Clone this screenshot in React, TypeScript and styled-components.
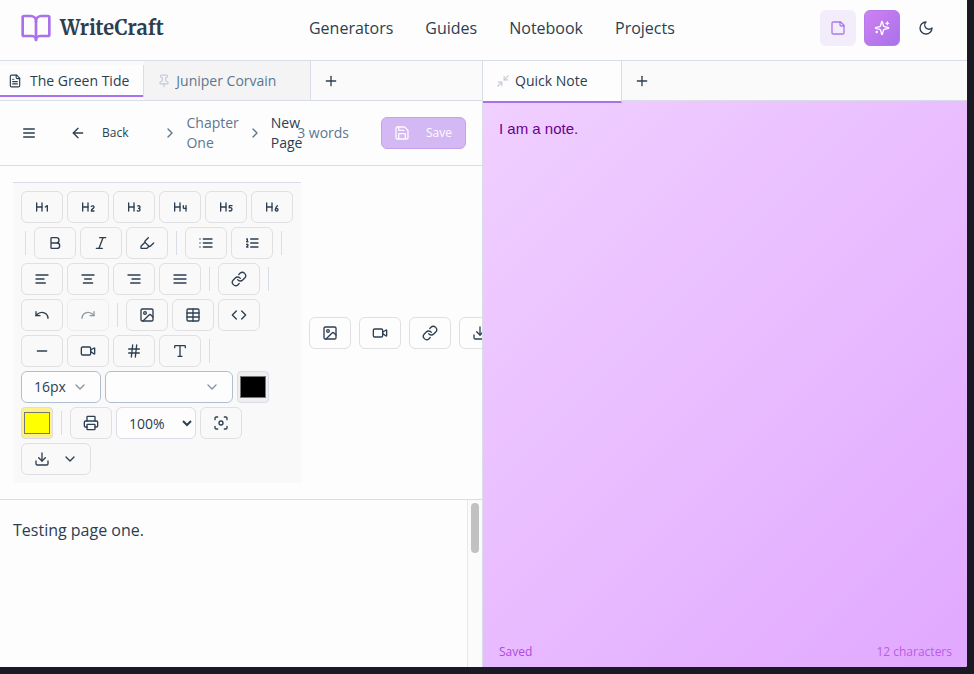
import React from 'react';
import styled, { createGlobalStyle, css } from 'styled-components';
import {
  ArrowLeft,
  Bold,
  BookOpen,
  ChevronDown,
  ChevronRight,
  Code,
  Download,
  Focus,
  Hash,
  Heading1,
  Heading2,
  Heading3,
  Heading4,
  Heading5,
  Heading6,
  Highlighter,
  Image as ImageIcon,
  Italic,
  Link as LinkIcon,
  Minimize2,
  Minus,
  Pin,
  Plus,
  Printer,
  Redo,
  Save,
  Table,
  Type,
  Undo,
  Video,
} from 'lucide-react';

const ink = '#2c3e50';
const muted = '#5d7790';
const line = '#d9dde8';
const accent = '#a971ec';

type Icon = React.ComponentType<{ size?: number }>;

const drawn = (...paths: string[]): Icon => ({ size = 16 }) => (
  <svg
    width={size}
    height={size}
    viewBox="0 0 24 24"
    fill="none"
    stroke="currentColor"
    strokeWidth="2"
    strokeLinecap="round"
    strokeLinejoin="round"
    aria-hidden="true"
  >
    {paths.map((d) => <path key={d} d={d} />)}
  </svg>
);

const Menu = drawn('M4 6h16', 'M4 12h16', 'M4 18h16');
const AlignLeft = drawn('M3 6h18', 'M3 12h12', 'M3 18h14');
const AlignCenter = drawn('M3 6h18', 'M7 12h10', 'M5 18h14');
const AlignRight = drawn('M3 6h18', 'M9 12h12', 'M7 18h14');
const AlignJustify = drawn('M3 6h18', 'M3 12h18', 'M3 18h18');
const List = drawn('M8 6h13', 'M8 12h13', 'M8 18h13', 'M3 6h.01', 'M3 12h.01', 'M3 18h.01');
const ListOrdered = drawn('M10 6h11', 'M10 12h11', 'M10 18h11', 'M4 6h1v4', 'M4 10h2', 'M6 18H4c0-1 2-2 2-3s-1-1.5-2-1');
const Moon = drawn('M12 3a6 6 0 0 0 9 9 9 9 0 1 1-9-9Z');
const StickyNote = drawn('M16 3H5a2 2 0 0 0-2 2v14a2 2 0 0 0 2 2h14a2 2 0 0 0 2-2V8Z', 'M15 3v4a2 2 0 0 0 2 2h4');
const FileText = drawn(
  'M15 2H6a2 2 0 0 0-2 2v16a2 2 0 0 0 2 2h12a2 2 0 0 0 2-2V7Z',
  'M14 2v4a2 2 0 0 0 2 2h4',
  'M10 9H8',
  'M16 13H8',
  'M16 17H8',
);
const Sparkles = drawn(
  'M9.937 15.5A2 2 0 0 0 8.5 14.063l-6.135-1.582a.5.5 0 0 1 0-.962L8.5 9.936A2 2 0 0 0 9.937 8.5l1.582-6.135a.5.5 0 0 1 .963 0L14.063 8.5A2 2 0 0 0 15.5 9.937l6.135 1.581a.5.5 0 0 1 0 .964L15.5 14.063a2 2 0 0 0-1.437 1.437l-1.582 6.135a.5.5 0 0 1-.963 0z',
  'M20 3v4',
  'M22 5h-4',
  'M4 17v2',
  'M5 18H3',
);

const GlobalStyle = createGlobalStyle`
  *, *::before, *::after { box-sizing: border-box; }
  body {
    margin: 0;
    background: #1a1a24;
    color: ${ink};
    font-family: "Open Sans", "Noto Sans", sans-serif;
    font-size: 14px;
    line-height: 20px;
  }
  button, select, input, textarea { font: inherit; color: inherit; }
  button { cursor: pointer; }
`;

const Backdrop = styled.div`
  height: 100vh;
  padding: 0 7px 7px 0;
`;

const Shell = styled.div`
  height: 100%;
  display: flex;
  flex-direction: column;
  background: #fdfdfd;
  border-radius: 0 0 2px 0;
  overflow: hidden;
`;

const Header = styled.header`
  display: flex;
  align-items: center;
  justify-content: space-between;
  flex: none;
  height: 61px;
  padding: 0 23px 4px 20px;
  border-bottom: 1px solid ${line};
`;

const Brand = styled.a`
  display: flex;
  align-items: center;
  gap: 8px;
  color: ${ink};
  font: bold 20px/32px Merriweather, "Liberation Serif", serif;
  text-decoration: none;
  svg { color: ${accent}; }
`;

const MainNav = styled.nav`
  display: flex;
  gap: 32px;
`;

const NavLink = styled.a`
  color: ${ink};
  font-size: 16px;
  line-height: 24px;
  text-decoration: none;
`;

const Actions = styled.div`
  display: flex;
  gap: 8px;
`;

const ActionButton = styled.button<{ $tone?: 'soft' | 'solid' }>`
  display: grid;
  place-items: center;
  width: 36px;
  height: 36px;
  padding: 0;
  border: 0;
  border-radius: 6px;
  background: transparent;
  ${(p) => p.$tone === 'soft' && css`
    background: #f3edfb;
    color: #ab79ea;
  `}
  ${(p) => p.$tone === 'solid' && css`
    border: 1px solid #b57aec;
    background: linear-gradient(135deg, #cf80f0, #a872ea);
    color: #fff;
  `}
`;

const Panes = styled.main`
  flex: 1;
  min-height: 0;
  display: grid;
  grid-template-columns: minmax(0, 483fr) minmax(0, 484fr);
`;

const Pane = styled.section<{ $divided?: boolean }>`
  display: flex;
  flex-direction: column;
  min-width: 0;
  min-height: 0;
  overflow: hidden;
  border-right: ${(p) => (p.$divided ? `1px solid ${line}` : '0')};
`;

const TabStrip = styled.div`
  display: flex;
  flex: none;
  height: 40px;
  background: #fafafa;
  border-bottom: 1px solid ${line};
`;

const Tab = styled.button<{ $look: 'raised' | 'idle' | 'full' }>`
  display: flex;
  align-items: center;
  gap: 5px;
  padding: 0 34px 0 13px;
  border: 0;
  border-right: 1px solid ${line};
  background: #f4f4f4;
  color: ${muted};
  font-weight: 500;
  white-space: nowrap;
  svg { color: #c3cbd8; }
  ${(p) => p.$look === 'raised' && css`
    gap: 8px;
    margin: 4px 0 3px;
    padding: 0 14px 0 8px;
    background: #fdfdfd;
    color: ${ink};
    box-shadow: inset 0 -2px ${accent};
    svg { color: ${ink}; }
  `}
  ${(p) => p.$look === 'full' && css`
    position: relative;
    z-index: 1;
    height: 42px;
    padding: 0 33px 0 13px;
    background: #fdfdfd;
    color: ${ink};
    border-bottom: 2px solid ${accent};
  `}
`;

const AddTab = styled.button`
  display: grid;
  place-items: center;
  width: 40px;
  padding: 0;
  border: 0;
  background: transparent;
`;

const PageBar = styled.div`
  display: flex;
  align-items: center;
  flex: none;
  height: 65px;
  padding: 0 16px 0 13px;
  border-bottom: 1px solid ${line};
`;

const GhostButton = styled.button`
  display: flex;
  align-items: center;
  flex: none;
  gap: 16px;
  height: 32px;
  padding: 0 8px;
  border: 0;
  background: transparent;
  font-size: 12px;
  font-weight: 500;
`;

const BackButton = styled(GhostButton)`
  margin-left: 17px;
  padding-right: 34px;
`;

const Crumbs = styled.nav`
  flex: 1;
  min-width: 0;
  display: flex;
  align-items: center;
  gap: 8px;
  svg { flex: none; color: ${muted}; }
`;

const Crumb = styled.a`
  flex: none;
  width: min-content;
  color: ${muted};
  text-decoration: none;
`;

const CurrentCrumb = styled.span`
  width: 24px;
  flex: none;
  color: ${ink};
  font-weight: 500;
`;

const WordCount = styled.span`
  flex: none;
  margin-right: 32px;
  color: ${muted};
`;

const SaveButton = styled.button`
  display: flex;
  align-items: center;
  flex: none;
  gap: 16px;
  height: 32px;
  padding: 0 13px 0 12px;
  border: 1px solid #c6a0ef;
  border-radius: 6px;
  background: #d4b8f4;
  color: #fdfaff;
  font-size: 12px;
  font-weight: 500;
`;

const ToolArea = styled.div`
  display: flex;
  align-items: center;
  gap: 8px;
  flex: none;
  padding: 16px 13px;
  border-bottom: 1px solid ${line};
  overflow: hidden;
`;

const FormatBar = styled.div`
  display: flex;
  flex-wrap: wrap;
  align-items: center;
  flex: none;
  gap: 4px;
  width: 288px;
  padding: 8px;
  border-top: 1px solid ${line};
  background: #f9f9f9;
`;

const InsertBar = styled.div`
  display: flex;
  flex: none;
  gap: 8px;
`;

const ToolButton = styled.button<{ $wide?: boolean }>`
  display: flex;
  align-items: center;
  justify-content: center;
  gap: 12px;
  width: ${(p) => (p.$wide ? 70 : 42)}px;
  height: 32px;
  padding: 0;
  border: 1px solid #e0e0e3;
  border-radius: 6px;
  background: transparent;
  &:disabled { color: ${ink}; opacity: 0.5; }
`;

const Divider = styled.span`
  width: 1px;
  height: 24px;
  margin: 0 4px;
  background: ${line};
`;

const SelectBox = styled.span<{ $width: number }>`
  display: grid;
  align-items: center;
  width: ${(p) => p.$width}px;
  height: 32px;
  > * { grid-area: 1 / 1; }
  svg {
    justify-self: end;
    margin-right: 13px;
    color: #8795a3;
    pointer-events: none;
  }
`;

const PlainSelect = styled.select`
  appearance: none;
  width: 100%;
  height: 32px;
  padding: 0 12px;
  border: 1px solid #b0bfd0;
  border-radius: 6px;
  background: #fdfdfd;
`;

const ZoomSelect = styled.select`
  width: 80px;
  height: 32px;
  padding: 0 0 0 8px;
  border: 1px solid ${line};
  border-radius: 6px;
  background: #fdfdfd;
`;

const Swatch = styled.input<{ $back: string }>`
  width: 32px;
  height: 32px;
  padding: 4px 2px;
  border: 1px solid ${line};
  border-radius: 4px;
  background: ${(p) => p.$back};
  &::-webkit-color-swatch-wrapper { padding: 0; }
  &::-webkit-color-swatch { border: 1px solid #767676; border-radius: 0; }
`;

const Document = styled.div`
  flex: 1;
  min-height: 0;
  display: flex;
`;

const Page = styled.textarea`
  flex: 1;
  min-width: 0;
  padding: 16px 13px;
  border: 0;
  outline: 0;
  resize: none;
  overflow: hidden;
  background: transparent;
  font-size: 16px;
  line-height: 28px;
`;

const ScrollTrack = styled.div`
  width: 15px;
  padding: 3px;
  border-left: 1px solid #e8e8e8;
  background: #fbfbfb;
`;

const ScrollThumb = styled.div`
  height: 50px;
  border-radius: 4px;
  background: #c1c1c1;
`;

const Note = styled.div`
  flex: 1;
  min-height: 0;
  display: flex;
  flex-direction: column;
  background: linear-gradient(135deg, #f0d0ff, #e1a8ff);
`;

const NoteText = styled.textarea`
  flex: 1;
  padding: 16px;
  border: 0;
  outline: 0;
  resize: none;
  overflow: hidden;
  background: transparent;
  color: #6a0090;
  font: 15px/24px "Liberation Sans", Arial, sans-serif;
`;

const NoteStatus = styled.footer`
  display: flex;
  justify-content: space-between;
  padding: 0 15px 5px 16px;
  color: #b04ae0;
  font-size: 12px;
`;

const Count = styled.span`
  opacity: 0.8;
`;

const headings = [Heading1, Heading2, Heading3, Heading4, Heading5, Heading6];

const Tool = ({ icon: Glyph, label, disabled }: { icon: Icon; label: string; disabled?: boolean }) => (
  <ToolButton type="button" aria-label={label} disabled={disabled}>
    <Glyph size={16} />
  </ToolButton>
);

export default function App() {
  return (
    <>
      <GlobalStyle />
      <Backdrop>
        <Shell>
          <Header>
            <Brand href="#home">
              <BookOpen size={32} />
              WriteCraft
            </Brand>
            <MainNav aria-label="Main">
              <NavLink href="#generators">Generators</NavLink>
              <NavLink href="#guides">Guides</NavLink>
              <NavLink href="#notebook">Notebook</NavLink>
              <NavLink href="#projects">Projects</NavLink>
            </MainNav>
            <Actions>
              <ActionButton type="button" $tone="soft" aria-label="Quick note"><StickyNote size={16} /></ActionButton>
              <ActionButton type="button" $tone="solid" aria-label="Assistant"><Sparkles size={16} /></ActionButton>
              <ActionButton type="button" aria-label="Dark mode"><Moon size={16} /></ActionButton>
            </Actions>
          </Header>
          <Panes>
            <Pane $divided>
              <TabStrip role="tablist">
                <Tab type="button" role="tab" aria-selected $look="raised"><FileText size={14} />The Green Tide</Tab>
                <Tab type="button" role="tab" aria-selected={false} $look="idle"><Pin size={14} />Juniper Corvain</Tab>
                <AddTab type="button" aria-label="New tab"><Plus size={16} /></AddTab>
              </TabStrip>
              <PageBar>
                <GhostButton type="button" aria-label="Menu"><Menu size={16} /></GhostButton>
                <BackButton type="button"><ArrowLeft size={16} />Back</BackButton>
                <Crumbs aria-label="Breadcrumb">
                  <ChevronRight size={16} />
                  <Crumb href="#chapter">Chapter One</Crumb>
                  <ChevronRight size={16} />
                  <CurrentCrumb>New Page</CurrentCrumb>
                </Crumbs>
                <WordCount>3 words</WordCount>
                <SaveButton type="button"><Save size={16} />Save</SaveButton>
              </PageBar>
              <ToolArea>
                <FormatBar role="toolbar" aria-label="Formatting">
                  {headings.map((icon, i) => <Tool key={i} icon={icon} label={`Heading ${i + 1}`} />)}
                  <Divider />
                  <Tool icon={Bold} label="Bold" />
                  <Tool icon={Italic} label="Italic" />
                  <Tool icon={Highlighter} label="Highlight" />
                  <Divider />
                  <Tool icon={List} label="Bulleted list" />
                  <Tool icon={ListOrdered} label="Numbered list" />
                  <Divider />
                  <Tool icon={AlignLeft} label="Align left" />
                  <Tool icon={AlignCenter} label="Align centre" />
                  <Tool icon={AlignRight} label="Align right" />
                  <Tool icon={AlignJustify} label="Justify" />
                  <Divider />
                  <Tool icon={LinkIcon} label="Link" />
                  <Divider />
                  <Tool icon={Undo} label="Undo" />
                  <Tool icon={Redo} label="Redo" disabled />
                  <Divider />
                  <Tool icon={ImageIcon} label="Image" />
                  <Tool icon={Table} label="Table" />
                  <Tool icon={Code} label="Code" />
                  <Tool icon={Minus} label="Horizontal rule" />
                  <Tool icon={Video} label="Video" />
                  <Tool icon={Hash} label="Word count" />
                  <Tool icon={Type} label="Typography" />
                  <Divider />
                  <SelectBox $width={80}>
                    <PlainSelect aria-label="Font size" defaultValue="16px"><option>16px</option></PlainSelect>
                    <ChevronDown size={16} />
                  </SelectBox>
                  <SelectBox $width={128}>
                    <PlainSelect aria-label="Font family" defaultValue=""><option value="" /></PlainSelect>
                    <ChevronDown size={16} />
                  </SelectBox>
                  <Swatch type="color" aria-label="Text colour" defaultValue="#000000" $back="#efefef" />
                  <Swatch type="color" aria-label="Highlight colour" defaultValue="#ffff00" $back="#fef08a" />
                  <Divider />
                  <Tool icon={Printer} label="Print" />
                  <ZoomSelect aria-label="Zoom" defaultValue="100%"><option>100%</option></ZoomSelect>
                  <Tool icon={Focus} label="Focus mode" />
                  <ToolButton type="button" $wide aria-label="Export">
                    <Download size={16} />
                    <ChevronDown size={16} />
                  </ToolButton>
                </FormatBar>
                <InsertBar role="toolbar" aria-label="Insert">
                  <Tool icon={ImageIcon} label="Insert image" />
                  <Tool icon={Video} label="Insert video" />
                  <Tool icon={LinkIcon} label="Insert link" />
                  <Tool icon={Download} label="Download" />
                </InsertBar>
              </ToolArea>
              <Document>
                <Page aria-label="Page text" defaultValue="Testing page one." />
                <ScrollTrack><ScrollThumb /></ScrollTrack>
              </Document>
            </Pane>
            <Pane>
              <TabStrip role="tablist">
                <Tab type="button" role="tab" aria-selected $look="full"><Minimize2 size={14} />Quick Note</Tab>
                <AddTab type="button" aria-label="New panel"><Plus size={16} /></AddTab>
              </TabStrip>
              <Note>
                <NoteText aria-label="Quick note" defaultValue="I am a note." />
                <NoteStatus>
                  <span>Saved</span>
                  <Count>12 characters</Count>
                </NoteStatus>
              </Note>
            </Pane>
          </Panes>
        </Shell>
      </Backdrop>
    </>
  );
}
